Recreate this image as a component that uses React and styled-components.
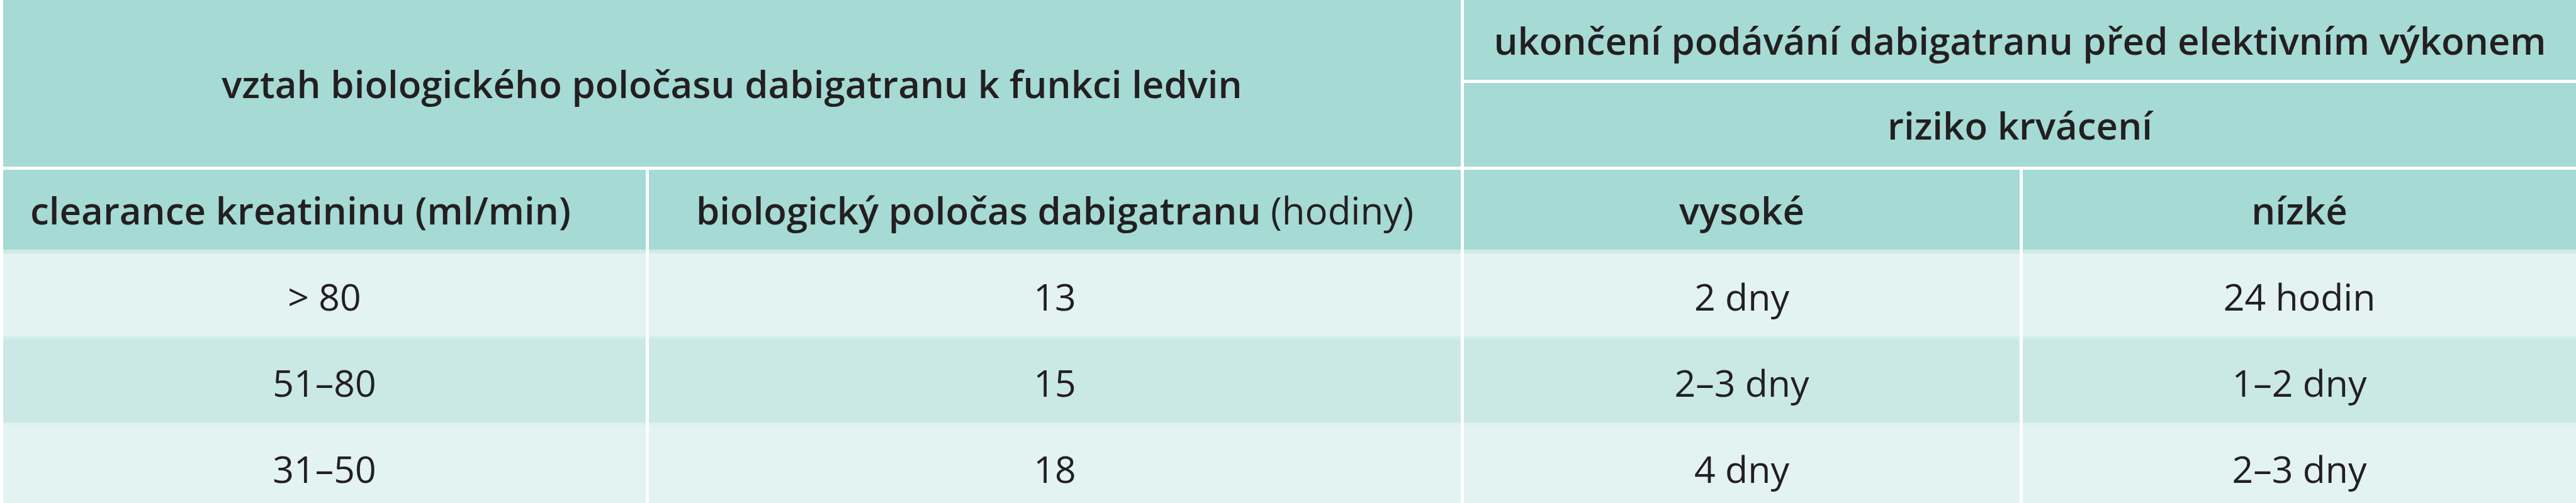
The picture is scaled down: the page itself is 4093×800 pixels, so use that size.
import React from 'react';
import styled, { createGlobalStyle } from 'styled-components';

const Global = createGlobalStyle`
  html, body {
    margin: 0;
    padding: 0;
    background: #ffffff;
    height: 800px;
    overflow: hidden;
  }
  body {
    font-family: "Open Sans", "Noto Sans", "DejaVu Sans", sans-serif;
    color: #231f20;
  }
`;

const Table = styled.div`
  display: grid;
  grid-template-columns: 1021px 1290px 883px 879px;
  grid-template-rows: 127px 138px 132px 138px 137px 137px;
  column-gap: 5px;
  margin-left: 5px;
  background: #ffffff;
`;

const HeadCell = styled.div`
  grid-column: ${(p) => p.$col};
  grid-row: ${(p) => p.$row};
  box-sizing: border-box;
  background: #a6dad4;
  border-top: ${(p) => (p.$top ? '5px solid #ffffff' : '0')};
  display: flex;
  align-items: center;
  justify-content: ${(p) => (p.$left ? 'flex-start' : 'center')};
  padding-left: ${(p) => (p.$left ? '43px' : '0')};
  font-size: 60px;
  font-weight: 600;
  white-space: nowrap;
`;

const Light = styled.span`
  font-weight: 400;
`;

const DataRow = styled.div`
  display: contents;
`;

const DataCell = styled.div`
  box-sizing: border-box;
  background: ${(p) => (p.$dark ? '#cae9e6' : '#e3f3f1')};
  border-top: ${(p) => p.$strip}px solid ${(p) => p.$stripColor};
  display: flex;
  align-items: center;
  justify-content: center;
  padding-top: 4px;
  font-size: 59px;
  font-weight: 400;
  white-space: nowrap;
`;

const rows = [
  { cells: ['> 80', '13', '2 dny', '24 hodin'], dark: false, strip: 6, stripColor: '#cfebe7' },
  { cells: ['51–80', '15', '2–3 dny', '1–2 dny'], dark: true, strip: 5, stripColor: '#d3ece9' },
  { cells: ['31–50', '18', '4 dny', '2–3 dny'], dark: false, strip: 5, stripColor: '#dff1ef' },
];

export default function App() {
  return (
    <>
      <Global />
      <Table>
        <HeadCell $col="1 / 3" $row="1 / 3">
          vztah biologického poločasu dabigatranu k funkci ledvin
        </HeadCell>
        <HeadCell $col="3 / 5" $row="1">
          ukončení podávání dabigatranu před elektivním výkonem
        </HeadCell>
        <HeadCell $col="3 / 5" $row="2" $top>
          riziko krvácení
        </HeadCell>
        <HeadCell $col="1" $row="3" $top $left>
          clearance kreatininu (ml/min)
        </HeadCell>
        <HeadCell $col="2" $row="3" $top>
          biologický poločas dabigatranu&nbsp;<Light>(hodiny)</Light>
        </HeadCell>
        <HeadCell $col="3" $row="3" $top>
          vysoké
        </HeadCell>
        <HeadCell $col="4" $row="3" $top>
          nízké
        </HeadCell>
        {rows.map((r, i) => (
          <DataRow key={i}>
            {r.cells.map((c, j) => (
              <DataCell key={j} $dark={r.dark} $strip={r.strip} $stripColor={r.stripColor}>
                {c}
              </DataCell>
            ))}
          </DataRow>
        ))}
      </Table>
    </>
  );
}
